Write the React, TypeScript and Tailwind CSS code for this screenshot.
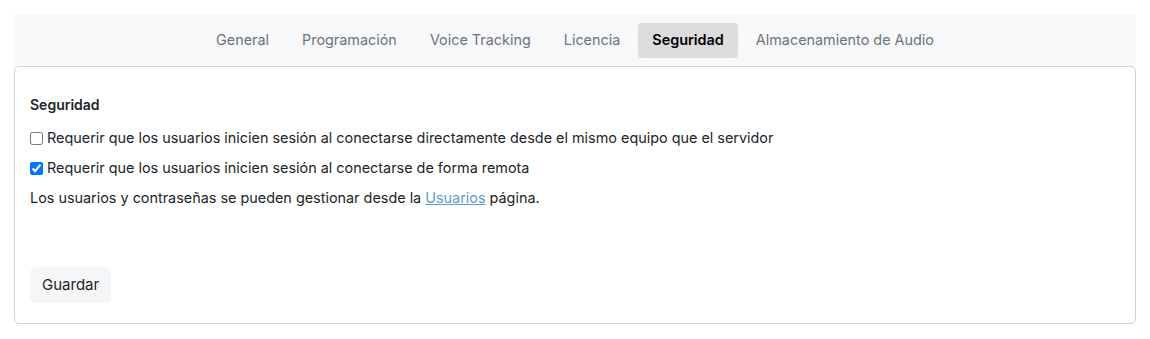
import { useState } from "react";

const tabs = [
  "General",
  "Programación",
  "Voice Tracking",
  "Licencia",
  "Seguridad",
  "Almacenamiento de Audio",
];

export default function App() {
  const [active, setActive] = useState("Seguridad");
  const [local, setLocal] = useState(false);
  const [remote, setRemote] = useState(true);

  return (
    <div className="min-h-screen bg-white px-[14px] pt-[14px] font-['Inter',sans-serif] text-[#212529]">
      <div className="flex h-[52px] items-center justify-center gap-[3px] bg-[#f7f8f9]">
        {tabs.map((t) => (
          <button
            key={t}
            onClick={() => setActive(t)}
            className={
              t === active
                ? "h-[35px] rounded-[4px] bg-[#dcdcdc] px-[14px] text-[14.4px] font-semibold text-black"
                : "h-[35px] rounded-[4px] px-[15px] text-[14.4px] text-[#6c757d]"
            }
          >
            {t}
          </button>
        ))}
      </div>
      <div className="flex h-[258px] flex-col rounded-[5px] border border-[#d3d3d3] px-[15px] pt-[28px]">
        <h2 className="text-[14px] font-semibold leading-[20px]">Seguridad</h2>
        <label className="mt-[13px] flex items-center gap-[4px] text-[14.4px] leading-[20px]">
          <input
            type="checkbox"
            checked={local}
            onChange={(e) => setLocal(e.target.checked)}
            className="m-0 h-[13px] w-[13px]"
          />
          Requerir que los usuarios inicien sesión al conectarse directamente desde el mismo equipo que el servidor
        </label>
        <label className="mt-[10px] flex items-center gap-[4px] text-[14.4px] leading-[20px]">
          <input
            type="checkbox"
            checked={remote}
            onChange={(e) => setRemote(e.target.checked)}
            className="m-0 h-[13px] w-[13px]"
          />
          Requerir que los usuarios inicien sesión al conectarse de forma remota
        </label>
        <p className="mt-[10px] text-[14.4px] leading-[20px]">
          Los usuarios y contraseñas se pueden gestionar desde la{" "}
          <a href="#" className="text-[#5e9ad6] underline">
            Usuarios
          </a>{" "}
          página.
        </p>
        <div className="mt-[59px]">
          <button className="h-[36px] rounded-[6px] bg-[#f5f6f7] px-[12px] text-[15px]">
            Guardar
          </button>
        </div>
      </div>
    </div>
  );
}
